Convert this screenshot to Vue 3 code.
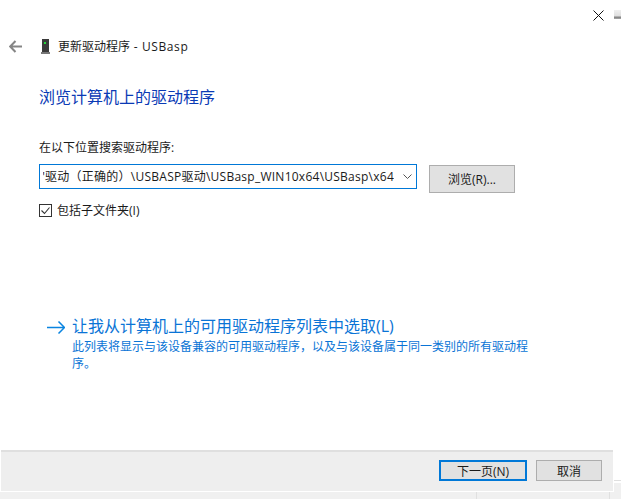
<script setup>
const path = '驱动（正确的）\\USBASP驱动\\USBasp_WIN10x64\\USBasp\\x64'
</script>

<template>
  <div class="screen">
    <div class="backdrop-top"></div>
    <div class="backdrop-side"></div>
    <div class="dialog">
      <div class="titlebar">
        <svg class="close" width="11" height="11" viewBox="0 0 11 11"><path d="M.5.5l10 10M10.5.5l-10 10" stroke="#111" fill="none"/></svg>
      </div>
      <div class="nav">
        <svg class="back" width="13" height="13" viewBox="0 0 13 13"><path d="M6.5 1L1.2 6.5l5.3 5.5M1.2 6.500H13" stroke="#858585" stroke-width="2" fill="none"/></svg>
        <svg class="device" width="9" height="15" viewBox="0 0 9 15">
          <rect x="1" y="0" width="7" height="13" fill="#3a3a3a"/>
          <rect x="0" y="13" width="9" height="2" fill="#777"/>
          <rect x="3" y="3" width="2" height="2" fill="#22d83a"/>
        </svg>
        <span class="nav-title">更新驱动程序<span class="nav-latin"> - USBasp</span></span>
      </div>
      <div class="content">
        <h1 class="heading">浏览计算机上的驱动程序</h1>
        <label class="field-label">在以下位置搜索驱动程序:</label>
        <div class="path-row">
          <div class="combo">
            <span class="combo-text"><span>'{{ path }}</span></span>
            <svg class="caret" width="9" height="5" viewBox="0 0 9 5"><path d="M.5.5l4 4 4-4" stroke="#555" fill="none"/></svg>
          </div>
          <button class="btn browse">浏览(R)...</button>
        </div>
        <div class="check-row">
          <svg class="check" width="13" height="13" viewBox="0 0 13 13"><rect x=".5" y=".5" width="12" height="12" fill="#fff" stroke="#333"/><path d="M2.5 6.5l3 3 5-6" stroke="#333" stroke-width="1.1" fill="none"/></svg>
          <span>包括子文件夹(I)</span>
        </div>
        <div class="pick">
          <svg class="arrow" width="18" height="13" viewBox="0 0 18 13"><path d="M11.500 .5l6 6-6 6M0 6.500h17" stroke="#0a84e0" stroke-width="1.500" fill="none"/></svg>
          <div class="pick-body">
            <div class="pick-title">让我从计算机上的可用驱动程序列表中选取(L)</div>
            <div class="pick-desc">此列表将显示与该设备兼容的可用驱动程序，以及与该设备属于同一类别的所有驱动程序。</div>
          </div>
        </div>
      </div>
      <div class="footer">
        <button class="btn next">下一页(N)</button>
        <button class="btn cancel">取消</button>
      </div>
    </div>
    <div class="taskstrip">
      <span class="seg seg-a"></span>
      <span class="seg seg-b"></span>
    </div>
  </div>
</template>

<style>
html, body { margin: 0; background: #fff; }
</style>

<style scoped>
.screen {
  width: 621px;
  height: 499px;
  position: relative;
  overflow: hidden;
  background: #fff;
  font-family: "Open Sans", "Noto Sans CJK SC", "Liberation Sans", sans-serif;
  color: #1a1a1a;
  font-size: 12px;
  display: flex;
  flex-direction: column;
}
.backdrop-top {
  position: absolute;
  left: 614px;
  top: 10px;
  width: 7px;
  height: 9px;
  background: linear-gradient(#f0f0f0, #dedede 70%, #777 75%, #aaa);
}
.backdrop-side {
  position: absolute;
  left: 614px;
  top: 480px;
  width: 7px;
  height: 19px;
  background: linear-gradient(#dfdfdf 1px, #fff 1px, #fff 3px, #f0f0f0 3px);
}
.dialog {
  width: 612px;
  height: 491px;
  margin-left: 1px;
  display: flex;
  flex-direction: column;
  flex: none;
  position: relative;
}
.titlebar {
  height: 36px;
  display: flex;
  justify-content: flex-end;
  align-items: flex-start;
  padding: 10px 9px 0 0;
  box-sizing: border-box;
  flex: none;
}
.nav {
  height: 20px;
  display: flex;
  align-items: center;
  padding-left: 8px;
  flex: none;
}
.back { margin-right: 19px; }
.device { margin-right: 8px; }
.nav-title { font-size: 12px; line-height: 20px; padding-top: 1px; }
.nav-latin { letter-spacing: 0.6px; }
.content {
  flex: 1;
  padding: 0 0 0 38px;
  display: flex;
  flex-direction: column;
  min-height: 0;
}
.heading {
  margin: 29px 0 0;
  font-size: 16px;
  line-height: 24px;
  font-weight: 400;
  color: #0a3ab5;
}
.field-label { margin-top: 30px; line-height: 18px; display: block; }
.path-row { display: flex; margin-top: 7px; align-items: flex-start; }
.combo {
  width: 378px;
  height: 25px;
  box-sizing: border-box;
  border: 1px solid #0078d7;
  display: flex;
  align-items: center;
  padding: 0 4px 0 3px;
  background: #fff;
}
.combo-text {
  flex: 1;
  min-width: 0;
  white-space: nowrap;
  overflow: hidden;
  font-size: 12px;
  line-height: 23px;
  letter-spacing: 0.25px;
  display: flex;
  justify-content: flex-end;
}
.caret { flex: none; margin-left: 9px; }
.btn {
  font: inherit;
  color: #1a1a1a;
  background: #e1e1e1;
  border: 1px solid #adadad;
  box-sizing: border-box;
  padding: 0;
}
.browse { width: 86px; height: 28px; margin: 1px 0 0 12px; }
.check-row { display: flex; align-items: center; gap: 5px; margin-top: 8px; height: 18px; }
.pick { display: flex; margin-top: 95px; margin-left: 8px; align-items: flex-start; }
.arrow { flex: none; margin: 7px 7px 0 0; }
.pick-body { width: 466px; }
.pick-title { font-size: 16px; line-height: 24px; color: #0a74d6; }
.pick-desc { font-size: 12px; line-height: 17px; color: #0a74d6; }
.footer {
  height: 41px;
  flex: none;
  background: #eeeeee;
  border-top: 2px solid #dfdfdf;
  box-sizing: border-box;
  display: flex;
  justify-content: flex-end;
  align-items: flex-start;
  padding: 8px 11px 0 0;
  gap: 9px;
}
.next { width: 88px; height: 21px; border: 2px solid #0078d7; }
.cancel { width: 66px; height: 21px; }
.taskstrip {
  flex: 1;
  margin-top: 1px;
  background: #f0f0f0;
  position: relative;
}
.seg { position: absolute; top: 0; bottom: 0; width: 1px; background: #e0e0e0; }
.seg-a { left: 476px; }
.seg-b { left: 609px; }
</style>
